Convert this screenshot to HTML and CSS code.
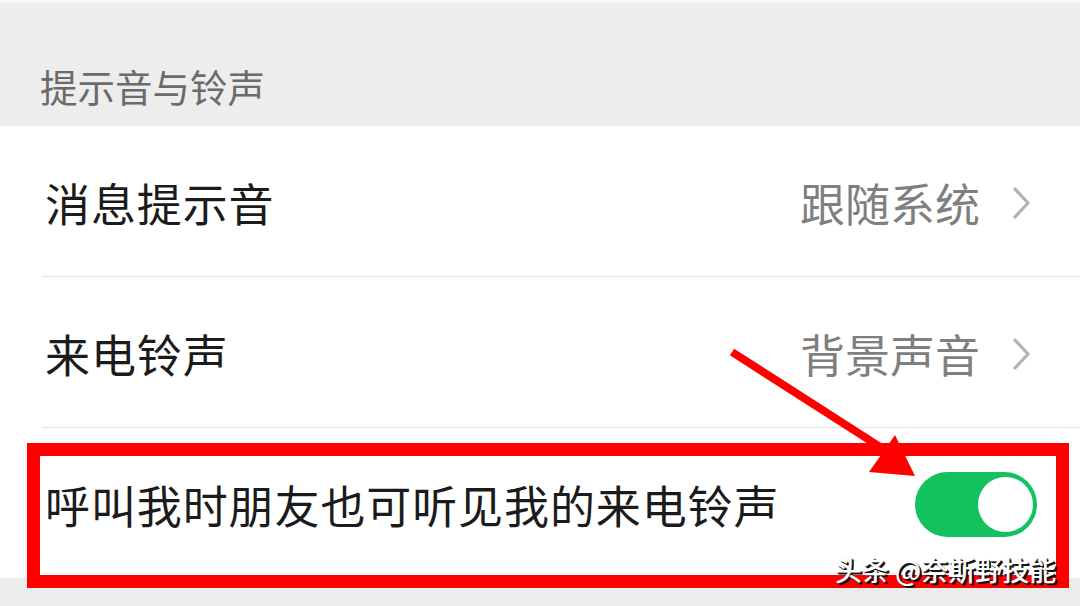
FILE: index.html
```html
<!DOCTYPE html>
<html lang="zh-CN">
<head>
    <meta charset="UTF-8">
    <meta name="viewport" content="width=device-width, initial-scale=1.0">
    <title>提示音与铃声</title>
    <link rel="stylesheet" href="styles.css">
</head>
<body>
    <div class="page">
        <div class="top-strip"></div>
        <div class="section-title">提示音与铃声</div>

        <div class="list">
            <div class="row">
                <span class="label">消息提示音</span>
                <span class="value">跟随系统</span>
                <svg class="chevron" width="20" height="36" viewBox="0 0 20 36">
                    <path d="M3 3 L17 18 L3 33" fill="none" stroke="#b3b3b3" stroke-width="3.2"/>
                </svg>
            </div>
            <div class="row">
                <span class="label">来电铃声</span>
                <span class="value">背景声音</span>
                <svg class="chevron" width="20" height="36" viewBox="0 0 20 36">
                    <path d="M3 3 L17 18 L3 33" fill="none" stroke="#b3b3b3" stroke-width="3.2"/>
                </svg>
            </div>
            <div class="row last">
                <span class="label">呼叫我时朋友也可听见我的来电铃声</span>
                <div class="switch on"><div class="knob"></div></div>
            </div>
        </div>

        <div class="footer"></div>

        <!-- annotations drawn on top of the screenshot -->
        <div class="mark-box"></div>
        <svg class="arrow" width="1080" height="606" viewBox="0 0 1080 606">
            <line x1="732" y1="352" x2="888" y2="452" stroke="#ff0000" stroke-width="8"/>
            <polygon points="915,476 869,472 895,435" fill="#ff0000"/>
        </svg>
        <div class="watermark">头条 @奈斯野技能</div>
    </div>
</body>
</html>
```

FILE: styles.css
```css
body {
    margin: 0;
    font-family: "Noto Sans CJK SC", "Noto Sans", sans-serif;
    background-color: #ededed;
}
.page {
    position: relative;
    width: 1080px;
    height: 606px;
    overflow: hidden;
    background: #ededed;
}
.top-strip {
    height: 3px;
    background: #f7f7f7;
}
.section-title {
    height: 123px;
    box-sizing: border-box;
    padding: 59px 0 0 40px;
    font-size: 37.5px;
    line-height: 48px;
    color: #6b6b6b;
}
.list {
    background: #fff;
}
.row {
    display: flex;
    align-items: center;
    height: 151px;
    box-sizing: border-box;
    margin-left: 42px;
    padding: 3px 49px 0 3px;
    border-bottom: 1px solid #e3e3e3;
}
.row.last {
    height: 150px;
    border-bottom: none;
    padding: 2px 43px 0 3px;
}
.label {
    flex: 1;
    font-size: 45px;
    letter-spacing: 0.9px;
    color: #1b1b1b;
    white-space: nowrap;
}
.value {
    font-size: 45px;
    color: #7f7f7f;
    margin-right: 31px;
}
.chevron {
    display: block;
}
.switch {
    width: 122px;
    height: 65px;
    border-radius: 33px;
    background: #14c15f;
    position: relative;
}
.knob {
    position: absolute;
    right: 4px;
    top: 5px;
    width: 55px;
    height: 55px;
    border-radius: 50%;
    background: #fff;
}
.footer {
    height: 30px;
    background: #ececec;
}
.mark-box {
    position: absolute;
    left: 27px;
    top: 443px;
    width: 1042px;
    height: 145px;
    box-sizing: border-box;
    border: 13px solid #ff0000;
}
.arrow {
    position: absolute;
    left: 0;
    top: 0;
}
.watermark {
    position: absolute;
    left: 835px;
    top: 551px;
    font-size: 27px;
    line-height: 38px;
    font-weight: 500;
    color: #fff;
    text-shadow: 2px 2px 0 #111, 1px 1px 1px #000;
}
```
